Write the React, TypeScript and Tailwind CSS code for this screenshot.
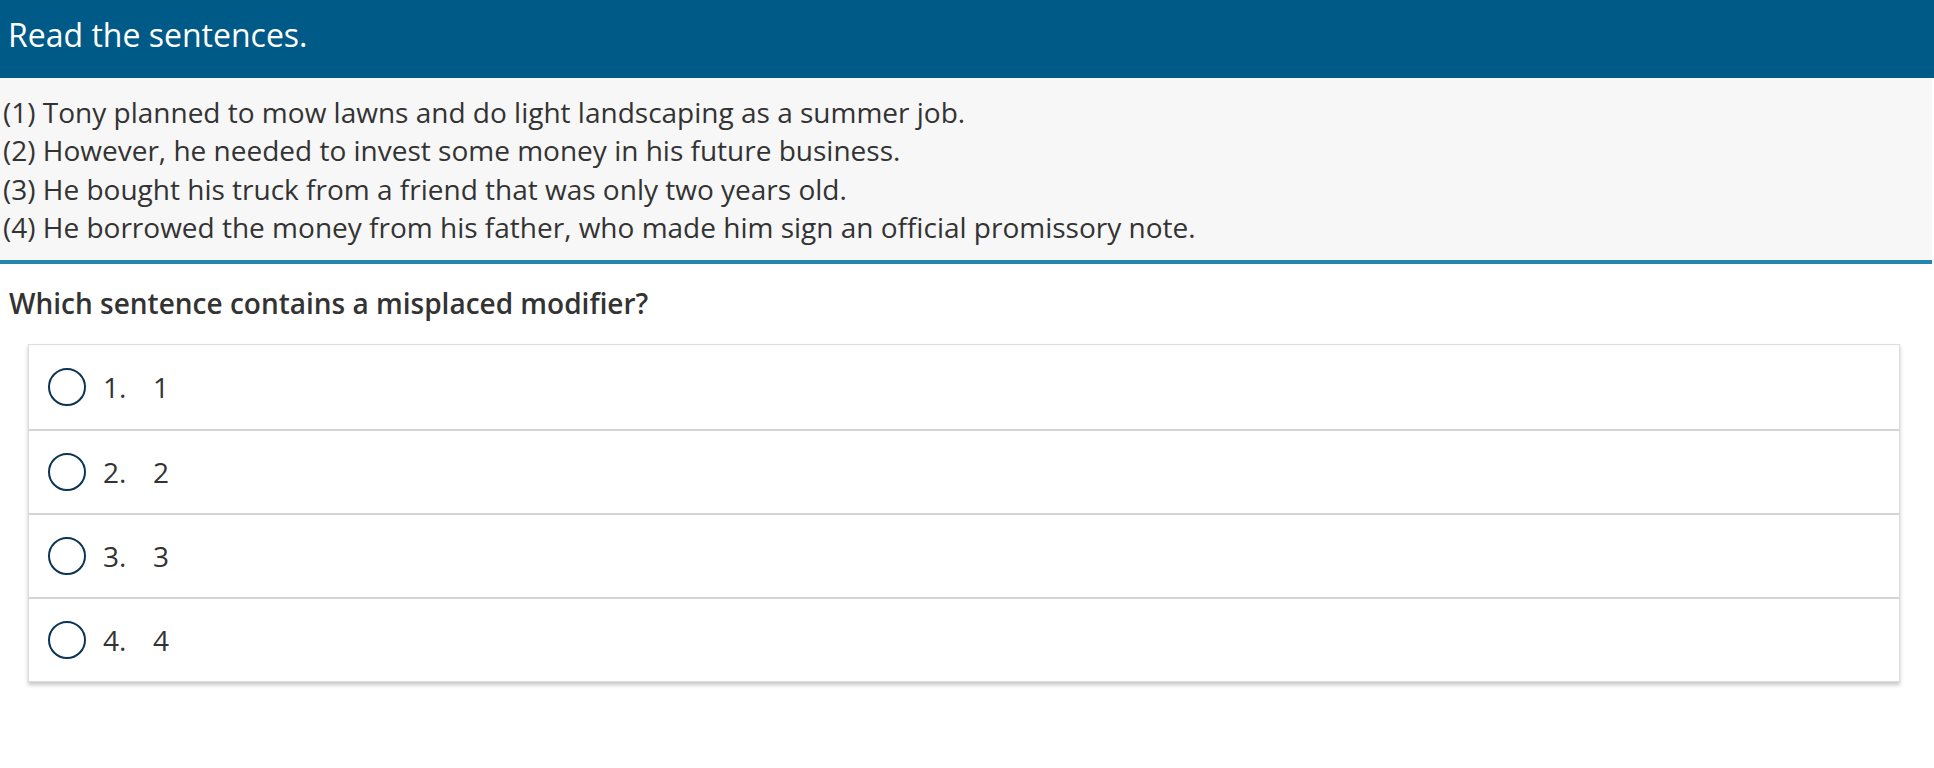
export default function App() {
  const sentences = [
    "(1) Tony planned to mow lawns and do light landscaping as a summer job.",
    "(2) However, he needed to invest some money in his future business.",
    "(3) He bought his truck from a friend that was only two years old.",
    "(4) He borrowed the money from his father, who made him sign an official promissory note.",
  ];
  const options = ["1", "2", "3", "4"];

  return (
    <main className="min-h-[768px] bg-white font-['Open_Sans',sans-serif] text-[#333333]">
      {/* header */}
      <header className="h-[78px] bg-[#005a87] px-[8px] flex items-center">
        <h1 className="text-[32px] text-white leading-none pb-[8px]">Read the sentences.</h1>
      </header>

      {/* passage */}
      <section className="bg-[#f7f7f7] border-b-4 border-[#2586ad] pt-[15px] pb-[14px] px-[3px] mr-[2px]">
        {sentences.map((s) => (
          <p key={s} className="text-[28px] leading-[38.3px]">
            {s}
          </p>
        ))}
      </section>

      {/* question */}
      <h2 className="text-[28px] font-semibold px-[9px] pt-[20px] pb-[22px] leading-[38px]">
        Which sentence contains a misplaced modifier?
      </h2>

      <div className="ml-[28px] w-[1872px] border border-[#dcdcdc] bg-white shadow-[0_3px_4px_rgba(0,0,0,0.22)]">
        {options.map((o, i) => (
          <label
            key={o}
            className={
              "flex items-center h-[84px] pl-[19px] " +
              (i > 0 ? "border-t-2 border-[#d4d4d4]" : "")
            }
          >
            <span className="w-[38px] h-[38px] rounded-full border-2 border-[#0c3454] shrink-0" />
            <span className="text-[28px] ml-[17px] w-[50px]">{o}.</span>
            <span className="text-[28px]">{o}</span>
          </label>
        ))}
      </div>
    </main>
  );
}
